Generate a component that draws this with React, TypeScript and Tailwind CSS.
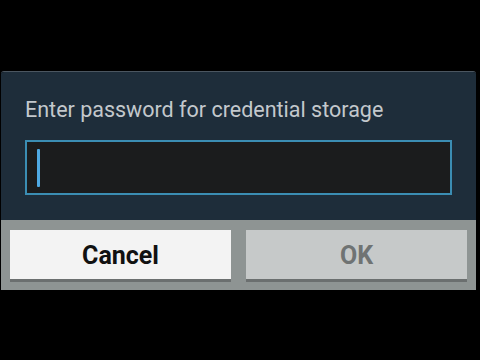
export default function App() {
  return (
    <div className="w-[480px] h-[360px] bg-black pt-[71px] pl-px font-['Roboto','Liberation_Sans',sans-serif]">
      <div className="w-[475px] rounded-t-[3px] overflow-hidden border-t border-[#4b5660]">
        {/* Body */}
        <div className="bg-[#1e2d3a] h-[148px] pt-[25px] pl-[24px] pr-[24px]">
          <p className="text-[21.5px] leading-[25px] text-[#c3c8cc]">
            Enter password for credential storage
          </p>
          <div className="mt-[18px] w-[427px] h-[55px] border-2 border-[#3b8db3] bg-[#1b1c1d] flex items-center pl-[10px]">
            <div className="w-[3px] h-[38px] bg-[#4fa9e3] rounded-[1px]" />
          </div>
        </div>
        {/* Buttons */}
        <div className="bg-[#8e9493] h-[70px] flex gap-[15px] pl-[9px] pr-[8px] pt-[10px]">
          <button
            type="button"
            className="w-[221px] h-[52px] pt-[3px] bg-[#f3f3f3] border-b-[3px] border-[#6b6f6f] text-[25px] font-bold text-[#111]"
          >
            Cancel
          </button>
          <button
            type="button"
            className="w-[221px] h-[52px] pt-[3px] bg-[#c6c9c9] border-b-[3px] border-[#6b6f6f] text-[25px] font-bold text-[#6f7373]"
          >
            OK
          </button>
        </div>
      </div>
    </div>
  )
}
